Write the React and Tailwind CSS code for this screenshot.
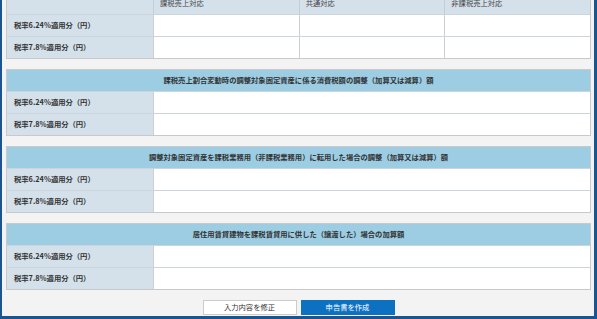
import React from 'react';

const font = { fontFamily: '"Noto Sans CJK JP", "Noto Sans", sans-serif' };

const Row = ({ label, cols = 1 }) => (
    <div className="flex h-[22px] border-t border-[#cdd5dc]">
        <div className="w-[146px] shrink-0 bg-[#d4e0ea] flex items-center pl-[7px] text-[7.3px] font-bold text-[#333]">{label}</div>
        {cols === 1 ? (
            <div className="flex-1 bg-white border-l border-[#cfcfcf]"></div>
        ) : (
            <div className="flex-1 grid grid-cols-3">
                <div className="bg-white border-l border-[#cfcfcf]"></div>
                <div className="bg-white border-l border-[#cfcfcf]"></div>
                <div className="bg-white border-l border-[#cfcfcf]"></div>
            </div>
        )}
    </div>
);

const Section = ({ title }) => (
    <div className="border border-[#c9c9c9]">
        <div className="h-[21px] bg-[#9ccde3] flex items-center justify-center text-[7.3px] font-bold text-[#333]">{title}</div>
        <Row label="税率6.24%適用分（円）" />
        <Row label="税率7.8%適用分（円）" />
    </div>
);

export default function App() {
    return (
        <div style={font} className="w-[597px] h-[319px] overflow-hidden bg-[#f3f3f3] border-l-2 border-r-[3px] border-b-[3px] border-[#1b5590] pl-[4px] pr-[3px] flex flex-col gap-[10px]">
            {/* 上部の表（スクロールで上が切れている） */}
            <div className="-mt-2 shrink-0 border border-[#c9c9c9]">
                <div className="flex h-[21px] bg-[#d4e0ea]">
                    <div className="w-[146px] shrink-0"></div>
                    <div className="flex-1 grid grid-cols-3 text-[7.3px] text-[#444]">
                        <div className="border-l border-[#c4ced8] pl-[6px] flex items-center">課税売上対応</div>
                        <div className="border-l border-[#c4ced8] pl-[6px] flex items-center">共通対応</div>
                        <div className="border-l border-[#c4ced8] pl-[6px] flex items-center">非課税売上対応</div>
                    </div>
                </div>
                <Row label="税率6.24%適用分（円）" cols={3} />
                <Row label="税率7.8%適用分（円）" cols={3} />
            </div>

            <Section title="課税売上割合変動時の調整対象固定資産に係る消費税額の調整（加算又は減算）額" />
            <Section title="調整対象固定資産を課税業務用（非課税業務用）に転用した場合の調整（加算又は減算）額" />
            <Section title="居住用賃貸建物を課税賃貸用に供した（譲渡した）場合の加算額" />

            <div className="flex justify-center gap-[4px] shrink-0">
                <button className="w-[94px] h-[15px] bg-white border border-[#cccccc] text-[7.3px] text-[#333] flex items-center justify-center">入力内容を修正</button>
                <button className="w-[94px] h-[15px] bg-[#0d71c2] text-[7.3px] text-white flex items-center justify-center">申告書を作成</button>
            </div>
        </div>
    );
}
